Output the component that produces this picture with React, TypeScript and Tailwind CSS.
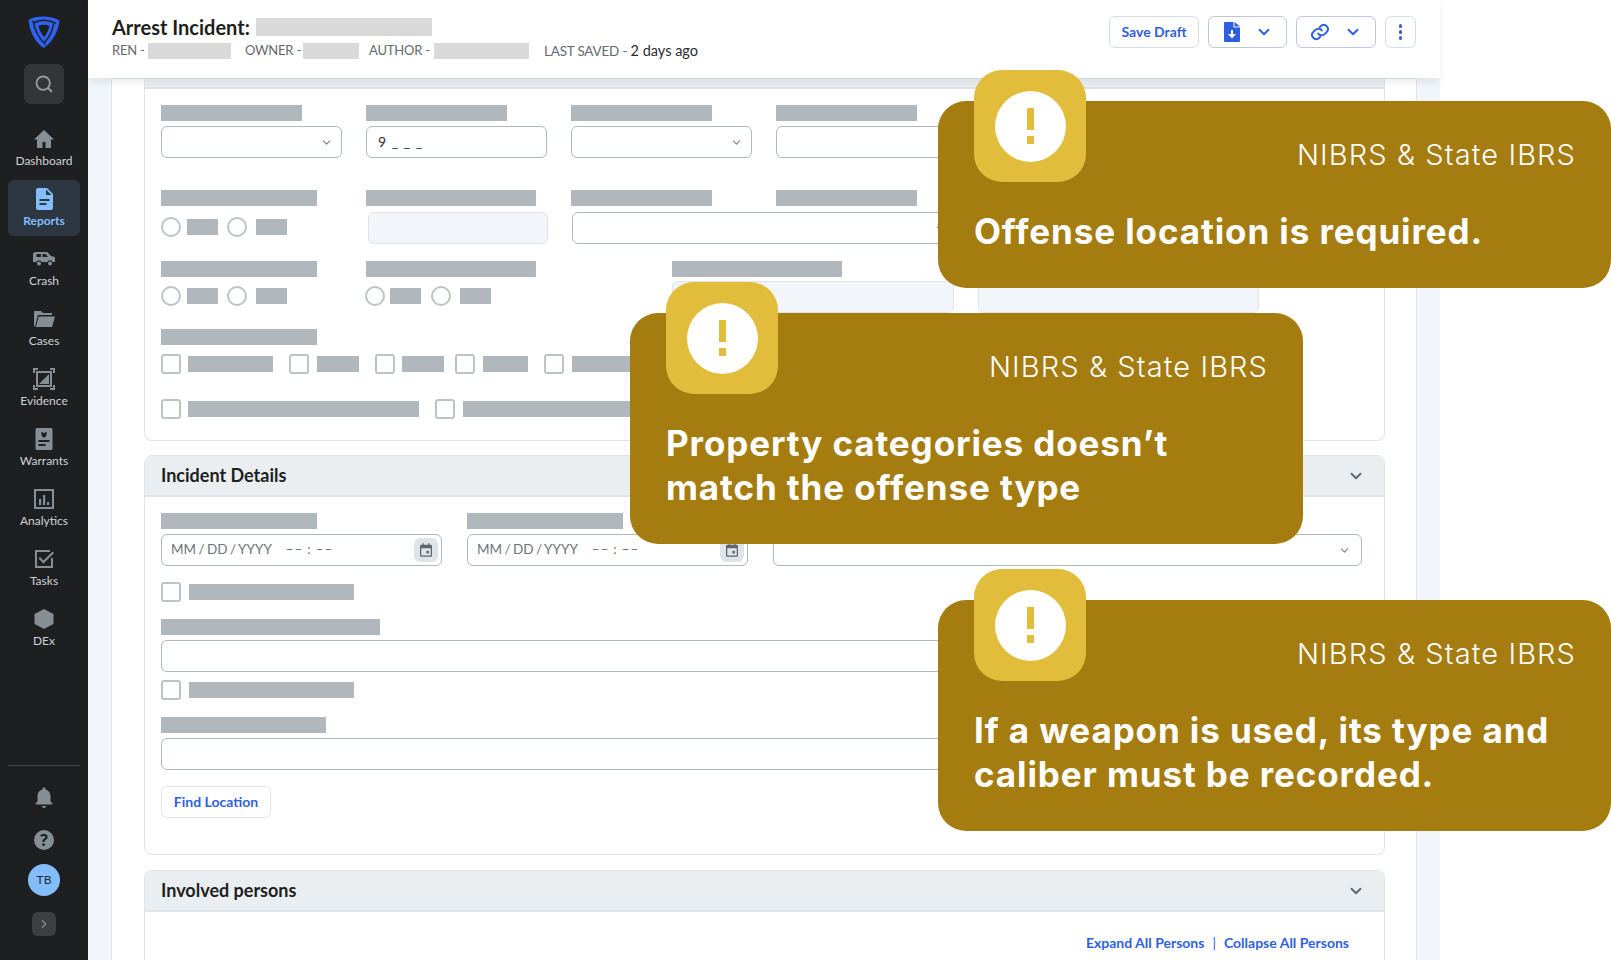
import React from "react";
import { ChevronDown, ChevronRight, Search } from "lucide-react";

const Block = ({ className }: { className: string }) => (
  <div className={`h-4 shrink-0 bg-[#b0b7bd] ${className}`} />
);

const Radios = ({ gap = "w-[6px]", gap2 = "w-[9px]" }: { gap?: string; gap2?: string }) => (
  <div className="mt-[9px] flex h-5 items-center">
    <div className="h-5 w-5 shrink-0 rounded-full border-2 border-[#bcc3c9] bg-white" />
    <div className={gap} />
    <Block className="w-[31px]" />
    <div className={gap2} />
    <div className="h-5 w-5 shrink-0 rounded-full border-2 border-[#bcc3c9] bg-white" />
    <div className="w-[9px]" />
    <Block className="w-[31px]" />
  </div>
);

const Check = ({ label, gap = "gap-[7px]" }: { label: string; gap?: string }) => (
  <div className={`flex items-center ${gap}`}>
    <div className="h-5 w-5 shrink-0 rounded-[3px] border-2 border-[#bcc3c9] bg-white" />
    <Block className={label} />
  </div>
);

const Select = ({ className }: { className: string }) => (
  <div className={`flex h-8 items-center justify-end rounded-md border border-[#b0b7bd] bg-white ${className}`}>
    <ChevronDown size={13} className="text-[#7b8288]" />
  </div>
);

const Disabled = ({ className }: { className: string }) => (
  <div className={`rounded-md border border-[#dfe4e9] bg-[#f2f6fa] ${className}`} />
);

const DateInput = () => (
  <div className="flex h-8 w-[281px] items-center justify-between rounded-md border border-[#b0b7bd] bg-white pl-[9px] pr-[3px] text-[13.5px] text-[#6c7379]">
    <div className="flex gap-[14px] pb-[2px]">
      <span className="[word-spacing:-1px]">MM / DD / YYYY</span>
      <span className="tracking-[0.8px]">–– : ––</span>
    </div>
    <div className="flex h-6 w-6 items-center justify-center rounded-md bg-[#dfe4e9]">
      <svg width="12" height="14" viewBox="0 0 14 16" fill="#5f666c">
        <path d="M3 0h1.500v2h5V0H11v2h1.500A1.500 1.500 0 0 1 14 3.500v11a1.500 1.500 0 0 1-1.500 1.500h-11A1.500 1.500 0 0 1 0 14.500v-11A1.500 1.500 0 0 1 1.500 2H3zM1.500 6v8.500h11V6z" />
        <rect x="7.500" y="9" width="3" height="3" />
      </svg>
    </div>
  </div>
);

const SectionHead = ({ title }: { title: string }) => (
  <div className="flex h-[41px] items-center justify-between rounded-t-lg border-b-2 border-[#dfe4e9] bg-[#ebeef1] pl-4 pr-[19px]">
    <span className="pb-[1px] text-[18px] font-bold text-[#1d1f21]">{title}</span>
    <ChevronDown size={18} strokeWidth={2.5} className="text-[#5f666c]" />
  </div>
);

const nav = [
  {
    label: "Dashboard",
    icon: <path d="M12 3 2 12.500h3V21h5.500v-6h3v6H19v-8.500h3z" />,
  },
  {
    label: "Reports",
    active: true,
    icon: (
      <path
        fillRule="evenodd"
        d="M6 1h9l6 6v14a2 2 0 0 1-2 2H6a2 2 0 0 1-2-2V3a2 2 0 0 1 2-2zm8 1.500V8h5.500zM7.500 12v2h10v-2zm0 4v2h7v-2z"
      />
    ),
  },
  {
    label: "Crash",
    icon: (
      <path
        fillRule="evenodd"
        d="M4 6h10c1 0 1.500.3 2.200 1l2.800 3 3 .8c.6.2 1 .7 1 1.400V16h-2.300a3 3 0 0 0-5.400 0H9.700a3 3 0 0 0-5.400 0H1V8c0-1.200 1.500-2 3-2zm.5 2v3H9V8zm6 0v3h5.500l-2.500-3zM7 15.500a2 2 0 1 1 0 4 2 2 0 0 1 0-4zm11 0a2 2 0 1 1 0 4 2 2 0 0 1 0-4z"
        transform="translate(0 -1)"
      />
    ),
  },
  {
    label: "Cases",
    icon: <path d="M2 4h7l2 2h9v2H6L3.500 18 3 19.500H2zM6.800 9.500H23L20 20H3.800z" />,
  },
  {
    label: "Evidence",
    icon: (
      <>
        <path d="M1 1h5v2H3v3H1zM18 1h5v5h-2V3h-3zM1 18h2v3h3v2H1zM21 18h2v5h-5v-2h3z" />
        <path fillRule="evenodd" d="M4 4h16v16H4zm2 2v12h12V6z" />
        <path d="M17 7v10H7z" />
      </>
    ),
  },
  {
    label: "Warrants",
    icon: (
      <path
        fillRule="evenodd"
        d="M5 1h14a1.500 1.500 0 0 1 1.500 1.500v19A1.500 1.500 0 0 1 19 23H5a1.500 1.500 0 0 1-1.500-1.500v-19A1.500 1.500 0 0 1 5 1zm4.500 4v3.500L12 11l2.500-2.500V5H13v1h-2V5zM6.500 13v2h11v-2zm0 4v2h7v-2z"
      />
    ),
  },
  {
    label: "Analytics",
    icon: (
      <path
        fillRule="evenodd"
        d="M2 2h20v20H2zm2 2v16h16V4zm3 8h2.200v6H7zm4-4h2.200v10H11zm4 7h2.200v3H15z"
      />
    ),
  },
  {
    label: "Tasks",
    icon: <path d="M3 3h15v2H5v14h14v-8h2v10H3zM20.500 4.500 22 6 11.500 16.500 6.500 11.500 8 10l3.500 3.500z" />,
  },
  {
    label: "DEx",
    icon: <path d="m12 2 9.500 5v10L12 22l-9.500-5V7z" />,
  },
];

const Sidebar = () => (
  <aside className="flex h-screen w-[88px] shrink-0 flex-col items-center bg-[#1d1f21] pb-6 pt-4">
    <svg width="32" height="32" viewBox="0 0 32 32" fill="none">
      <path d="M.5 4C4 1.500 9 .5 15 .5s12 1.500 16.500 4C30 15 26 25 15.500 32 6 25 1.500 15 .5 4z" fill="#2f62f0" />
      <g stroke="#1d1f21" strokeWidth="1.500">
        <path d="M5 4.500C6.500 14 10.500 22 17.500 28.500" />
        <path d="M28 7.500C20 3.500 12 3.500 5.500 7" />
        <path d="M25.500 8C24.500 15 21 21.500 16.500 26.500" />
      </g>
      <path d="M10.500 9.500c3.500-1.200 7.500-1.200 11 .5-.8 3.800-2.700 7.500-5.300 11.300C13.300 17.800 11.300 14 10.500 9.500z" fill="#1d1f21" />
    </svg>
    <div className="mt-4 flex h-10 w-10 items-center justify-center rounded-md bg-[#333537]">
      <Search size={20} strokeWidth={2.2} className="text-[#9a9da0]" />
    </div>
    <nav className="mt-4 flex flex-col gap-1">
      {nav.map((n) => (
        <div
          key={n.label}
          className={`flex h-14 w-[72px] flex-col items-center rounded-md pt-[7px] ${
            n.active ? "bg-[#2d3742] text-[#84bdfd]" : "text-[#868e96]"
          }`}
        >
          <svg width="24" height="24" viewBox="0 0 24 24" fill="currentColor">
            {n.icon}
          </svg>
          <span
            className={`mt-[2px] text-[12px] leading-4 ${
              n.active ? "font-bold" : "text-[#d0d3d6]"
            }`}
          >
            {n.label}
          </span>
        </div>
      ))}
    </nav>
    <div className="mt-auto h-px w-[72px] bg-[#45484b]" />
    <svg className="mt-[20px]" width="24" height="24" viewBox="0 0 24 24" fill="#868e96">
      <path d="M12 1.500c.9 0 1.500.6 1.500 1.500v.4c3.500.8 5 3.600 5 7.100v4.500l2 3v.5h-17V18l2-3v-4.500c0-3.500 1.500-6.300 5-7.100V3c0-.9.600-1.500 1.500-1.500zM10 20h4c0 1.200-.8 2-2 2s-2-.8-2-2z" />
    </svg>
    <svg className="mt-[20px]" width="20" height="20" viewBox="0 0 20 20">
      <circle cx="10" cy="10" r="10" fill="#868e96" />
      <text x="10" y="15.500" textAnchor="middle" fontSize="16" fontWeight="700" fill="#1d1f21" fontFamily="Open Sans">?</text>
    </svg>
    <div className="mt-[14px] flex h-8 w-8 items-center justify-center rounded-full bg-[#84bdfd] text-[12px] text-[#1d2b3a]">
      TB
    </div>
    <div className="mt-4 flex h-6 w-6 items-center justify-center rounded-md bg-[#3d3f41]">
      <ChevronRight size={14} className="text-[#868e96]" />
    </div>
  </aside>
);

const Header = () => (
  <header className="relative z-10 flex h-[78px] w-[1352px] shrink-0 items-start justify-between bg-white pl-6 pr-[24px] pt-4 shadow-[0_4px_8px_rgba(60,70,80,0.10)]">
    <div>
      <div className="flex h-[22px] items-center gap-[6px]">
        <span className="text-[20px] font-bold text-[#1d1f21]">Arrest Incident:</span>
        <div className="h-[18px] w-[176px] bg-[#d9d9d9]" />
      </div>
      <div className="mt-[5px] flex h-4 items-center whitespace-nowrap text-[13px] tracking-[-0.2px] text-[#636a70]">
        <span className="w-[33px]">REN -</span>
        <div className="ml-[3px] h-4 w-[83px] bg-[#d9d9d9]" />
        <span className="ml-[14px] w-[55px]">OWNER -</span>
        <div className="ml-[3px] h-4 w-[56px] bg-[#d9d9d9]" />
        <span className="ml-[10px] w-[61px]">AUTHOR -</span>
        <div className="ml-[4px] h-4 w-[95px] bg-[#d9d9d9]" />
        <span className="ml-[15px] text-[13.5px]">LAST SAVED -&nbsp;</span>
        <span className="text-[14.5px] tracking-normal text-[#2a2d30]">2 days ago</span>
      </div>
    </div>
    <div className="flex h-8 gap-[9px] text-[#2f5fe0]">
      <button className="h-8 w-[90px] rounded-md border border-[#d5dde6] pb-[2px] text-[14px] font-bold">
        Save Draft
      </button>
      <button className="flex h-8 w-[79px] items-center justify-between rounded-md border border-[#bcc8d6] pl-[15px] pr-[13px]">
        <svg width="16" height="20" viewBox="0 0 16 20" fill="#2f5fe0">
          <path
            fillRule="evenodd"
            d="M1 0h8.500v5.500H16V19a1 1 0 0 1-1 1H1a1 1 0 0 1-1-1V1a1 1 0 0 1 1-1zm9.500 0L16 4.500h-5.500zM7 8v4H4l4 4.500L12 12H9V8z"
          />
        </svg>
        <ChevronDown size={18} strokeWidth={2.5} />
      </button>
      <button className="flex h-8 w-[80px] items-center justify-between rounded-md border border-[#bcc8d6] pl-[13px] pr-[13px]">
        <svg width="20" height="20" viewBox="0 0 24 24" fill="none" stroke="#2f5fe0" strokeWidth="2.4" strokeLinecap="round">
          <path d="M10 14a5 5 0 0 0 7.500.5l3-3a5 5 0 0 0-7-7l-1.700 1.700" />
          <path d="M14 10a5 5 0 0 0-7.500-.5l-3 3a5 5 0 0 0 7 7l1.700-1.700" />
        </svg>
        <ChevronDown size={18} strokeWidth={2.5} />
      </button>
      <button className="flex h-8 w-[31px] flex-col items-center justify-center gap-[2.5px] rounded-md border border-[#d5dde6]">
        <span className="h-[3.5px] w-[3.5px] rounded-full bg-[#2f5fe0]" />
        <span className="h-[3.5px] w-[3.5px] rounded-full bg-[#2f5fe0]" />
        <span className="h-[3.5px] w-[3.5px] rounded-full bg-[#2f5fe0]" />
      </button>
    </div>
  </header>
);

const Bubble = ({ className, lines }: { className: string; lines: string[] }) => (
  <div className={`absolute z-20 rounded-[28px] bg-[#a57c10] font-['Inter',sans-serif] text-white ${className}`}>
    <div className="absolute left-[36px] top-[-31px] flex h-[112px] w-[112px] items-center justify-center rounded-[28px] bg-[#e2bd3b]">
      <div className="flex h-[71px] w-[71px] flex-col items-center justify-center gap-[6px] rounded-full bg-white">
        <div className="h-[22px] w-[7px] bg-[#e2bd3b]" />
        <div className="h-[8px] w-[7px] bg-[#e2bd3b]" />
      </div>
    </div>
    <div className="pr-[35px] pt-[36px] text-right text-[29px] font-light leading-[36px] tracking-[1.1px]">
      NIBRS &amp; State IBRS
    </div>
    <div className="pl-[36px] pt-[36px] text-[35px] font-bold leading-[44px] tracking-[0.9px]">
      {lines.map((l) => (
        <div key={l}>{l}</div>
      ))}
    </div>
  </div>
);

const Field = ({ w, children }: { w: string; children: React.ReactNode }) => (
  <div className="w-[181px]">
    <Block className={w} />
    <div className="mt-[5px]">{children}</div>
  </div>
);

export default function App() {
  return (
    <div className="relative flex h-screen w-full overflow-hidden bg-white font-['Lato',sans-serif]">
      <Sidebar />
      <main className="flex h-screen w-[1352px] shrink-0 flex-col bg-[#f2f6fa]">
        <Header />
        <div className="ml-[23px] w-[1306px] flex-1 border-x border-t border-[#dfe4e9] bg-white pl-8 pr-8">
          <div className="h-[362px] w-[1241px] rounded-b-lg border-x border-b border-[#dfe4e9]">
            <div className="h-[10px] border-b-2 border-[#dfe4e9] bg-[#ebeef1]" />
            <div className="px-4 pt-[16px]">
              <div className="flex gap-6">
                <Field w="w-[141px]"><Select className="w-[181px] pr-2" /></Field>
                <Field w="w-[141px]">
                  <div className="flex h-8 w-[181px] items-center rounded-md border border-[#b0b7bd] pb-[2px] pl-[11px] text-[14px] tracking-[1px] text-[#2a2d30]">
                    9 _ _ _
                  </div>
                </Field>
                <Field w="w-[141px]"><Select className="w-[181px] pr-2" /></Field>
                <Field w="w-[141px]"><Select className="w-[181px] pr-2" /></Field>
              </div>
              <div className="mt-8 flex gap-6">
                <div className="w-[181px] pb-px">
                  <Block className="w-[156px]" />
                  <div className="pt-[2px]"><Radios /></div>
                </div>
                <div className="w-[181px]">
                  <Block className="w-[170px]" />
                  <Disabled className="ml-[2px] mt-[6px] h-8 w-[180px]" />
                </div>
                <div className="w-[181px]">
                  <Block className="w-[141px]" />
                  <div className="ml-[1px] mt-[6px] flex h-8 w-[600px] items-center rounded-md border border-[#b0b7bd] pl-[361px]">
                    <ChevronDown size={13} className="text-[#7b8288]" />
                  </div>
                </div>
                <div><Block className="w-[141px]" /></div>
              </div>
              <div className="-mt-[1px] flex">
                <div className="mt-[18px] w-[204px]">
                  <Block className="w-[156px]" />
                  <Radios />
                </div>
                <div className="mt-[18px] w-[307px]">
                  <div className="ml-[1px]"><Block className="w-[170px]" /></div>
                  <Radios gap="w-[5px]" gap2="w-[10px]" />
                </div>
                <div className="mt-[18px] w-[306px]">
                  <Block className="w-[170px]" />
                  <Disabled className="mt-1 h-8 w-[282px]" />
                </div>
                <div className="mt-[18px] pt-5">
                  <Disabled className="h-8 w-[281px]" />
                </div>
              </div>
              <Block className="mt-[16px] w-[156px]" />
              <div className="mt-[9px] flex h-5">
                <Check label="w-[85px]" />
                <div className="ml-4"><Check label="w-[42px]" gap="gap-2" /></div>
                <div className="ml-4"><Check label="w-[42px]" /></div>
                <div className="ml-[11px]"><Check label="w-[45px]" gap="gap-2" /></div>
                <div className="ml-4"><Check label="w-[90px]" gap="gap-2" /></div>
              </div>
              <div className="mt-[25px] flex h-5 gap-4">
                <Check label="w-[231px]" />
                <Check label="w-[180px]" gap="gap-2" />
              </div>
            </div>
          </div>

          <div className="mt-[14px] h-[400px] w-[1241px] rounded-lg border border-[#dfe4e9]">
            <SectionHead title="Incident Details" />
            <div className="px-4 pt-[16px]">
              <div className="flex gap-[25px]">
                <div>
                  <Block className="w-[156px]" />
                  <div className="mt-[5px]"><DateInput /></div>
                </div>
                <div>
                  <Block className="w-[156px]" />
                  <div className="mt-[5px]"><DateInput /></div>
                </div>
                <div className="pt-[21px]"><Select className="w-[589px] pr-[10px]" /></div>
              </div>
              <div className="mt-4"><Check label="w-[165px]" gap="gap-2" /></div>
              <Block className="mt-[17px] w-[219px]" />
              <div className="mt-[5px] h-8 w-[1202px] rounded-md border border-[#b0b7bd]" />
              <div className="mt-2"><Check label="w-[165px]" gap="gap-2" /></div>
              <Block className="mt-[17px] w-[165px]" />
              <div className="mt-[5px] h-8 w-[1202px] rounded-md border border-[#b0b7bd]" />
              <button className="mt-4 h-8 w-[110px] rounded-md border border-[#dfe4e9] pb-[2px] text-[14px] font-bold text-[#2f5fe0]">
                Find Location
              </button>
            </div>
          </div>

          <div className="mt-[15px] h-[120px] w-[1241px] rounded-t-lg border-x border-t border-[#dfe4e9]">
            <SectionHead title="Involved persons" />
            <div className="flex justify-end gap-[8px] pr-[35px] pt-[20px] text-[14px] font-bold text-[#2f5fe0]">
              <span>Expand All Persons</span>
              <span className="font-normal">|</span>
              <span>Collapse All Persons</span>
            </div>
          </div>
        </div>
      </main>

      <Bubble className="left-[938px] top-[101px] h-[187px] w-[673px]" lines={["Offense location is required."]} />
      <Bubble className="left-[630px] top-[313px] h-[231px] w-[673px]" lines={["Property categories doesn’t", "match the offense type"]} />
      <Bubble className="left-[938px] top-[600px] h-[231px] w-[673px]" lines={["If a weapon is used, its type and", "caliber must be recorded."]} />
    </div>
  );
}
